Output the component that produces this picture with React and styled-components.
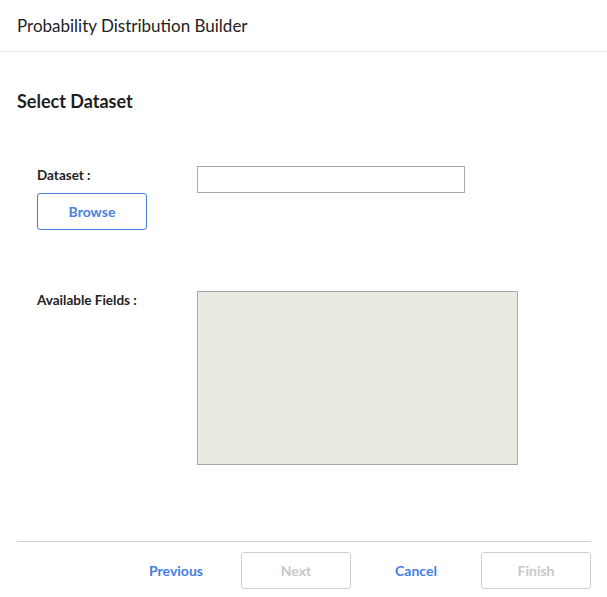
import styled, { createGlobalStyle } from 'styled-components';

const GlobalStyle = createGlobalStyle`
  body {
    margin: 0;
    background: #fff;
    font-family: Lato, "Liberation Sans", sans-serif;
    color: #222;
  }
`;

function App() {
  return (
    <>
      <GlobalStyle />
      <Dialog>
        <Header>
          <Title>Probability Distribution Builder</Title>
        </Header>
        <Body>
          <StepTitle>Select Dataset</StepTitle>
          <FieldRow>
            <LabelCol>
              <Label>Dataset :</Label>
              <OutlineButton>Browse</OutlineButton>
            </LabelCol>
            <TextInput type="text" />
          </FieldRow>
          <FieldRow top={61}>
            <LabelCol>
              <Label>Available Fields :</Label>
            </LabelCol>
            <FieldList />
          </FieldRow>
        </Body>
        <Footer>
          <TextButton>Previous</TextButton>
          <OutlineButton disabled>Next</OutlineButton>
          <TextButton>Cancel</TextButton>
          <OutlineButton disabled>Finish</OutlineButton>
        </Footer>
      </Dialog>
    </>
  );
}

const Dialog = styled.div`
  width: 607px;
  height: 597px;
  display: flex;
  flex-direction: column;
`;

const Header = styled.div`
  height: 52px;
  border-bottom: 1px solid #e9e9e9;
  display: flex;
  align-items: center;
  padding: 0 17px;
  box-sizing: border-box;
`;

const Title = styled.h1`
  margin: 0;
  font-size: 17px;
  font-weight: 400;
  color: #222;
`;

const Body = styled.div`
  flex: 1;
  padding: 38px 17px 0;
`;

const StepTitle = styled.h2`
  margin: 0;
  font-size: 18px;
  font-weight: 700;
  line-height: 22px;
  color: #1e1e1e;
`;

const FieldRow = styled.div`
  display: flex;
  margin-top: ${(p) => p.top ?? 54}px;
  padding-left: 20px;
`;

const LabelCol = styled.div`
  width: 160px;
  display: flex;
  flex-direction: column;
  gap: 8px;
`;

const Label = styled.span`
  font-size: 13.5px;
  font-weight: 700;
  line-height: 19px;
`;

const TextInput = styled.input`
  width: 268px;
  height: 27px;
  box-sizing: border-box;
  border: 1px solid #aaa;
  margin: 0;
  padding: 0 6px;
  font-family: inherit;
  outline: none;
`;

const FieldList = styled.div`
  width: 321px;
  height: 174px;
  box-sizing: border-box;
  background: #eae9e2;
  border: 1px solid #a9a9a9;
`;

const ButtonBase = styled.button`
  width: 110px;
  height: 37px;
  box-sizing: border-box;
  border-radius: 3px;
  font-family: inherit;
  font-size: 14px;
  font-weight: 700;
  cursor: pointer;
  padding: 0;
`;

const OutlineButton = styled(ButtonBase)`
  background: #fff;
  border: 1px solid ${(p) => (p.disabled ? '#cfcfcf' : '#4a80dc')};
  color: ${(p) => (p.disabled ? '#c8c8c8' : '#4a80dc')};
  cursor: ${(p) => (p.disabled ? 'default' : 'pointer')};
`;

const TextButton = styled(ButtonBase)`
  background: transparent;
  border: none;
  color: #3f7fe3;
`;

const Footer = styled.div`
  margin: 0 16px 8px 17px;
  border-top: 1px solid #cfcfcf;
  padding-top: 10px;
  display: flex;
  justify-content: flex-end;
  gap: 10px;
`;

export default App;
